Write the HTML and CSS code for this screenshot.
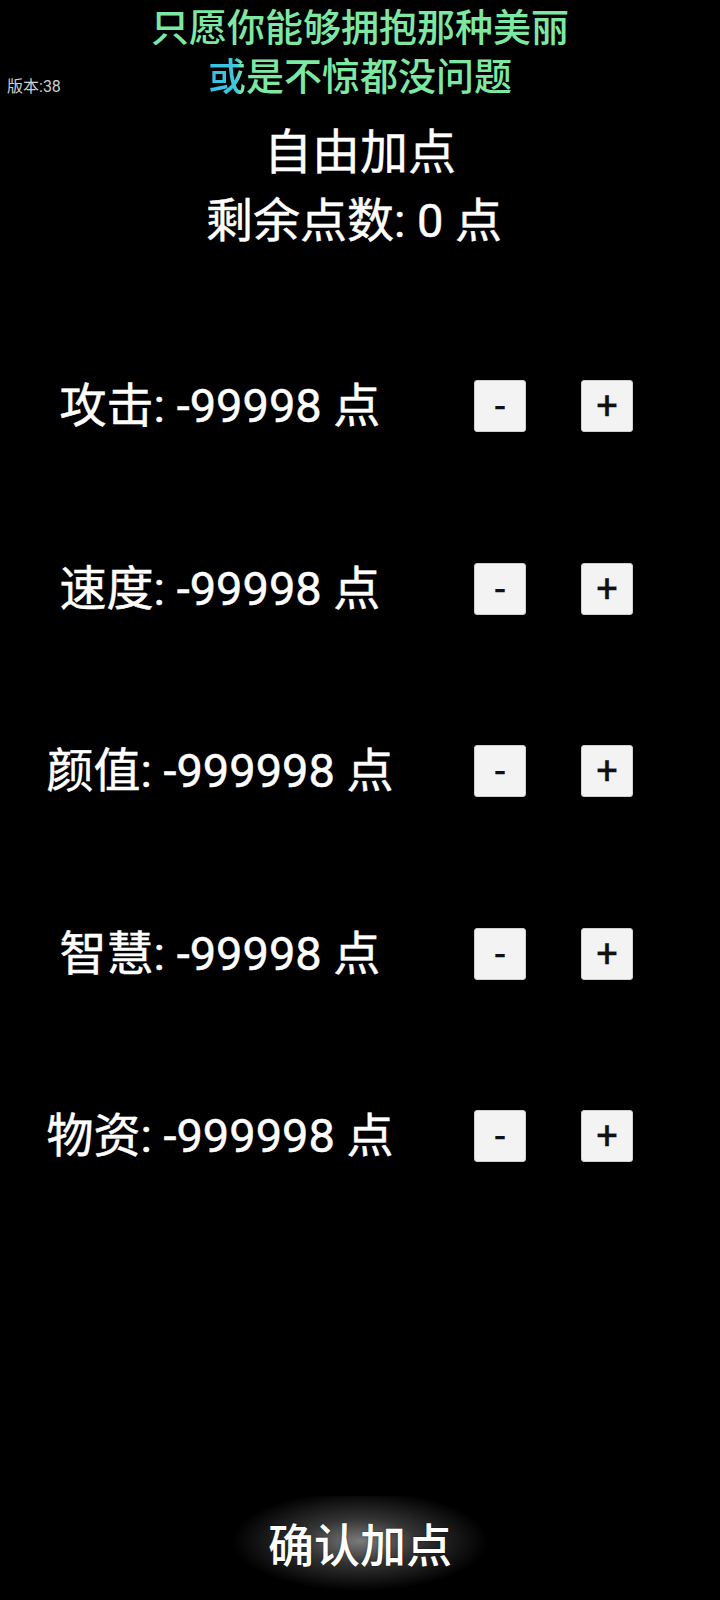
FILE: index.html
```html
<!DOCTYPE html>
<html lang="zh">
<head>
<meta charset="utf-8">
<link rel="stylesheet" href="styles.css">
</head>
<body>
<div class="page">
  <div class="version">版本:38</div>
  <div class="lyrics">
    <div class="lyric-line">只愿你能够拥抱那种美丽</div>
    <div class="lyric-line"><span class="sung">或</span>是不惊都没问题</div>
  </div>
  <div class="title">自由加点</div>
  <div class="remain">剩余点数: 0 点</div>
  <div class="stats">
    <div class="row"><div class="label">攻击: -99998 点</div><div class="btn minus">-</div><div class="btn plus">+</div></div>
    <div class="row"><div class="label">速度: -99998 点</div><div class="btn minus">-</div><div class="btn plus">+</div></div>
    <div class="row"><div class="label">颜值: -999998 点</div><div class="btn minus">-</div><div class="btn plus">+</div></div>
    <div class="row"><div class="label">智慧: -99998 点</div><div class="btn minus">-</div><div class="btn plus">+</div></div>
    <div class="row"><div class="label">物资: -999998 点</div><div class="btn minus">-</div><div class="btn plus">+</div></div>
  </div>
  <div class="confirm"><span class="confirm-text">确认加点</span></div>
</div>
</body>
</html>
```
FILE: styles.css
```css
html, body {
  margin: 0;
  padding: 0;
  background: #000;
}
body {
  font-family: "Roboto", "Noto Sans CJK SC", sans-serif;
  color: #fff;
}
.page {
  position: relative;
  width: 720px;
  min-height: 1600px;
  display: flex;
  flex-direction: column;
  align-items: stretch;
}
.version {
  position: absolute;
  left: 7px;
  top: 77px;
  font-size: 16px;
  line-height: 20px;
  color: #cfcfcf;
}
.lyrics {
  padding-top: 4px;
  text-align: center;
  font-size: 38px;
  line-height: 49px;
  font-weight: 500;
  color: #7ee8a2;
}
.sung {
  background: linear-gradient(90deg, #36bfe6 0%, #3fc9dc 75%, #7ee8a2 90%);
  -webkit-background-clip: text;
  background-clip: text;
  color: transparent;
}
.title {
  margin-top: 21px;
  text-align: center;
  font-size: 48px;
  line-height: 60px;
  -webkit-text-stroke: 0.4px #fff;
}
.remain {
  margin-top: 8px;
  padding-right: 12px;
  text-align: center;
  font-size: 47px;
  line-height: 60px;
  -webkit-text-stroke: 0.5px #fff;
}
.stats {
  margin-top: 64px;
  display: flex;
  flex-direction: column;
}
.row {
  height: 182.5px;
  display: flex;
  align-items: center;
}
.label {
  width: 440px;
  text-align: center;
  font-size: 47px;
  line-height: 60px;
  -webkit-text-stroke: 0.5px #fff;
}
.btn {
  width: 52px;
  height: 52px;
  box-sizing: border-box;
  background: #f3f3f3;
  border: 1px solid #cfcfcf;
  border-radius: 3px;
  color: #111;
  display: flex;
  align-items: center;
  justify-content: center;
  font-family: "Roboto", sans-serif;
  font-size: 38px;
  font-weight: 400;
  line-height: 1;
  -webkit-text-stroke: 0.3px #111;
}
.minus {
  margin-left: 34px;
}
.plus {
  margin-left: 55px;
}
.confirm {
  margin-top: 268px;
  height: 100px;
  display: flex;
  align-items: center;
  justify-content: center;
  background: radial-gradient(ellipse 128px 50px at 50% 45%, rgba(255,255,255,0.48) 0%, rgba(255,255,255,0.2) 45%, rgba(255,255,255,0) 100%);
}
.confirm-text {
  font-size: 46px;
  line-height: 60px;
  font-weight: 500;
  color: #fff;
  text-shadow: 0 0 2px rgba(0,0,0,0.6);
}
```
